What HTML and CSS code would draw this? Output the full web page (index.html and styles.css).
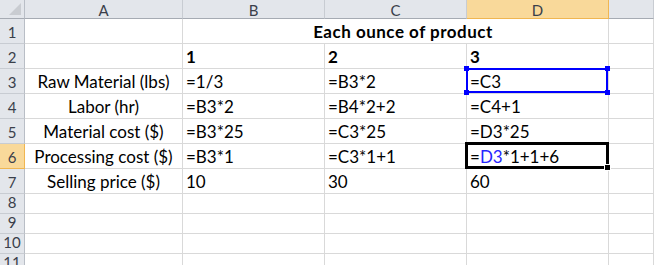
FILE: index.html
```html
<!DOCTYPE html>
<html lang="en">
<head>
<meta charset="utf-8">
<title>Product cost sheet</title>
<link rel="stylesheet" href="styles.css">
</head>
<body>
<div class="sheet">
  <div class="corner"><span class="tri"></span></div>
  <div class="ch">A</div>
  <div class="ch">B</div>
  <div class="ch">C</div>
  <div class="ch ch-on">D</div>
  <div class="ch ch-last"></div>

  <div class="rh">1</div>
  <div class="c"></div>
  <div class="c merged b">Each ounce of product</div>
  <div class="c"></div>

  <div class="rh">2</div>
  <div class="c"></div>
  <div class="c b">1</div>
  <div class="c b">2</div>
  <div class="c b">3</div>
  <div class="c"></div>

  <div class="rh">3</div>
  <div class="c lbl">Raw Material (lbs)</div>
  <div class="c">=1/3</div>
  <div class="c">=B3*2</div>
  <div class="c sel">=C3<span class="h h-tl"></span><span class="h h-tr"></span><span class="h h-bl"></span><span class="h h-br"></span></div>
  <div class="c"></div>

  <div class="rh">4</div>
  <div class="c lbl">Labor (hr)</div>
  <div class="c">=B3*2</div>
  <div class="c">=B4*2+2</div>
  <div class="c">=C4+1</div>
  <div class="c"></div>

  <div class="rh">5</div>
  <div class="c lbl">Material cost ($)</div>
  <div class="c">=B3*25</div>
  <div class="c">=C3*25</div>
  <div class="c">=D3*25</div>
  <div class="c"></div>

  <div class="rh rh-on">6</div>
  <div class="c lbl">Processing cost ($)</div>
  <div class="c">=B3*1</div>
  <div class="c">=C3*1+1</div>
  <div class="c active">=<span class="ref">D3</span>*1+1+6<span class="fill"></span></div>
  <div class="c"></div>

  <div class="rh">7</div>
  <div class="c lbl">Selling price ($)</div>
  <div class="c">10</div>
  <div class="c">30</div>
  <div class="c">60</div>
  <div class="c"></div>

  <div class="rh">8</div>
  <div class="c"></div><div class="c"></div><div class="c"></div><div class="c"></div><div class="c"></div>
  <div class="rh">9</div>
  <div class="c"></div><div class="c"></div><div class="c"></div><div class="c"></div><div class="c"></div>
  <div class="rh">10</div>
  <div class="c"></div><div class="c"></div><div class="c"></div><div class="c"></div><div class="c"></div>
  <div class="rh">11</div>
  <div class="c"></div><div class="c"></div><div class="c"></div><div class="c"></div><div class="c"></div>
</div>
</body>
</html>
```

FILE: styles.css
```css
html, body {
  margin: 0;
  padding: 0;
  background: #ffffff;
  overflow: hidden;
}

.sheet {
  display: grid;
  grid-template-columns: 25px 158px 142px 142px 142px 1fr;
  grid-template-rows: 19px repeat(7, 25px) repeat(4, 20px);
  width: 654px;
  height: 265px;
  overflow: hidden;
  font-family: Lato, "Open Sans", sans-serif;
  font-size: 17px;
  color: #000;
}

.sheet > div {
  box-sizing: border-box;
  border-right: 1px solid #d9d9d9;
  border-bottom: 1px solid #d9d9d9;
}

/* header strip */
.corner,
.ch,
.rh {
  background: #e3e6eb;
  color: #3a3f4a;
  font-size: 15px;
}

.sheet > .corner {
  position: relative;
  border-right: 1px solid #b9bec6;
  border-bottom: 1px solid #a6abb3;
}

.tri {
  position: absolute;
  right: 3px;
  bottom: 3px;
  width: 0;
  height: 0;
  border-left: 12px solid transparent;
  border-bottom: 12px solid #c9ccd1;
}

.sheet > .ch {
  display: flex;
  align-items: center;
  justify-content: center;
  border-right: 1px solid #c8ccd2;
  border-bottom: 1px solid #a6abb3;
  padding-top: 1px;
}

.sheet > .ch-on {
  background: #f9d99a;
  border-right: 1px solid #f0b651;
  border-bottom: 1px solid #f0b651;
}

.sheet > .rh {
  display: flex;
  align-items: flex-end;
  justify-content: center;
  padding-bottom: 2px;
  border-right: 1px solid #b9bec6;
  border-bottom: 1px solid #c8ccd2;
}

.sheet > .rh-on {
  background: #f9d99a;
  border-bottom: 1px solid #f0b651;
  border-right: 1px solid #f0b651;
}

/* cells */
.c {
  display: flex;
  align-items: flex-end;
  padding: 0 3px 1px 3px;
  white-space: nowrap;
  position: relative;
  line-height: 20px;
}

.lbl {
  justify-content: center;
}

.b {
  font-weight: 700;
  letter-spacing: 0.2px;
}

.merged {
  grid-column: span 3;
  justify-content: center;
  padding-right: 0;
  padding-left: 15px;
  letter-spacing: 0.5px;
}

/* blue reference range */
.sel::after {
  content: "";
  position: absolute;
  top: -1px;
  left: -1px;
  right: 0;
  bottom: 0;
  border: 2px solid #0000ff;
  box-sizing: border-box;
  pointer-events: none;
}

.h {
  position: absolute;
  width: 5px;
  height: 5px;
  background: #0000ff;
  z-index: 2;
}
.h-tl { top: -3px; left: -3px; }
.h-tr { top: -3px; right: -2px; }
.h-bl { bottom: -2px; left: -3px; }
.h-br { bottom: -2px; right: -2px; }

/* cell being edited */
.active::after {
  content: "";
  position: absolute;
  top: -2px;
  left: -2px;
  right: -1px;
  bottom: -1px;
  border: 3px solid #000;
  box-sizing: border-box;
  pointer-events: none;
}

.ref {
  color: #2626ff;
}

.fill {
  position: absolute;
  right: -3px;
  bottom: -3px;
  width: 5px;
  height: 5px;
  background: #000;
  border: 1px solid #fff;
  z-index: 2;
}
```
